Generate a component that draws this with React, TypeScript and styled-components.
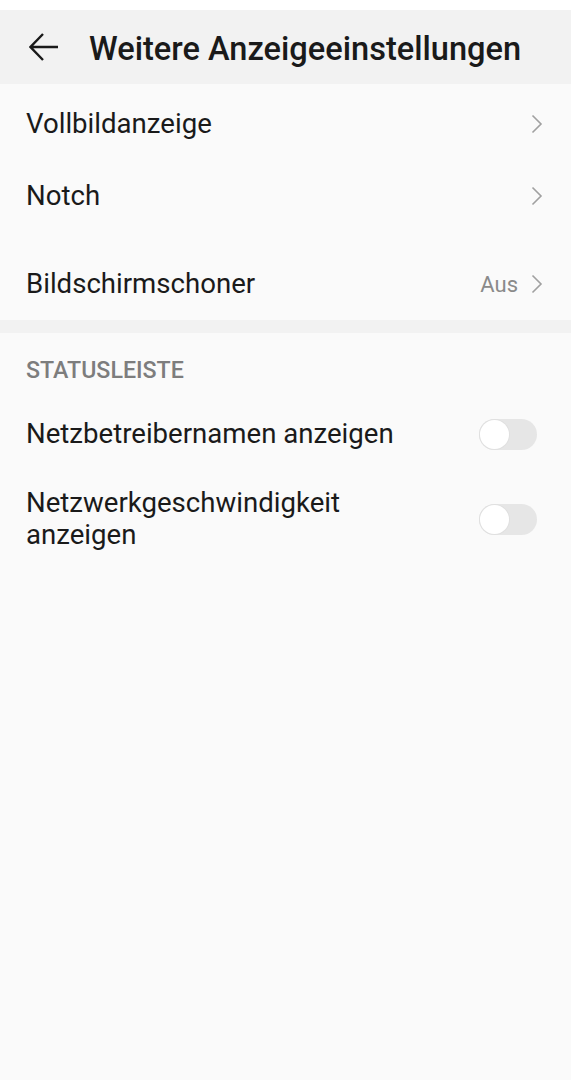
import styled, { createGlobalStyle } from "styled-components";

const GlobalStyle = createGlobalStyle`
  html, body {
    margin: 0;
    padding: 0;
    background: #fafafa;
  }
  body {
    font-family: Roboto, "Noto Sans", "Liberation Sans", sans-serif;
    color: #1a1a1a;
  }
`;

const Page = styled.div`
  min-height: 1080px;
  background: #fafafa;
  border-top: 10px solid #ffffff;
  box-sizing: border-box;
`;

const Header = styled.header`
  height: 74px;
  background: #f2f2f2;
  display: flex;
  align-items: center;
  padding-left: 28px;
  gap: 29px;
`;

const BackButton = styled.button`
  border: 0;
  background: none;
  padding: 0;
  width: 32px;
  height: 32px;
  display: flex;
  align-items: center;
  justify-content: center;
  color: #1a1a1a;
`;

const Title = styled.h1`
  margin: 0;
  padding-top: 3px;
  font-size: 32.6px;
  font-weight: 500;
  color: #1a1a1a;
  line-height: 40px;
`;

const Row = styled.div<{ $height: number; $offset?: number }>`
  height: ${(p) => p.$height}px;
  padding: ${(p) => p.$offset ?? 0}px 28px 0 26px;
  box-sizing: border-box;
  display: flex;
  align-items: center;
  justify-content: space-between;
`;

const Label = styled.span`
  font-size: 27.6px;
  line-height: 32px;
  color: #1a1a1a;
  max-width: 420px;
`;

const Trailing = styled.span`
  display: flex;
  align-items: center;
  gap: 13px;
  color: #8a8a8a;
  font-size: 22px;
`;

const Divider = styled.div`
  height: 13px;
  background: #f2f2f2;
`;

const SectionTitle = styled.div`
  height: 58px;
  padding: 23px 26px 0;
  box-sizing: border-box;
  font-size: 23.2px;
  line-height: 28px;
  font-weight: 500;
  color: #7d7d7d;
`;

const Toggle = styled.span`
  width: 58px;
  height: 31px;
  border-radius: 16px;
  background: #e6e6e6;
  position: relative;
  margin-right: 6px;
  flex-shrink: 0;
  &::after {
    content: "";
    position: absolute;
    left: 1px;
    top: 1px;
    width: 29px;
    height: 29px;
    border-radius: 50%;
    background: #ffffff;
    box-shadow: 0 0 0 1px #e0e0e0;
  }
`;

function Chevron() {
  return (
    <svg width="12" height="20" viewBox="0 0 12 20" fill="none">
      <path d="M1.5 1.5 L10 10 L1.5 18.5" stroke="#a0a0a0" strokeWidth="1.6" />
    </svg>
  );
}

function BackArrow() {
  return (
    <svg width="30" height="30" viewBox="0 0 30 30" fill="none">
      <path
        d="M29 15 H2 M14 2 L1.5 15 L14 28"
        stroke="#1a1a1a"
        strokeWidth="2.4"
      />
    </svg>
  );
}

export default function App() {
  return (
    <>
      <GlobalStyle />
      <Page>
        <Header>
          <BackButton aria-label="Zurück">
            <BackArrow />
          </BackButton>
          <Title>Weitere Anzeigeeinstellungen</Title>
        </Header>
        <Row $height={80}>
          <Label>Vollbildanzeige</Label>
          <Trailing>
            <Chevron />
          </Trailing>
        </Row>
        <Row $height={64}>
          <Label>Notch</Label>
          <Trailing>
            <Chevron />
          </Trailing>
        </Row>
        <Row $height={92} $offset={20}>
          <Label>Bildschirmschoner</Label>
          <Trailing>
            Aus
            <Chevron />
          </Trailing>
        </Row>
        <Divider />
        <SectionTitle>STATUSLEISTE</SectionTitle>
        <Row $height={86}>
          <Label>Netzbetreibernamen anzeigen</Label>
          <Toggle />
        </Row>
        <Row $height={84}>
          <Label>
            Netzwerkgeschwindigkeit
            <br />
            anzeigen
          </Label>
          <Toggle />
        </Row>
      </Page>
    </>
  );
}
